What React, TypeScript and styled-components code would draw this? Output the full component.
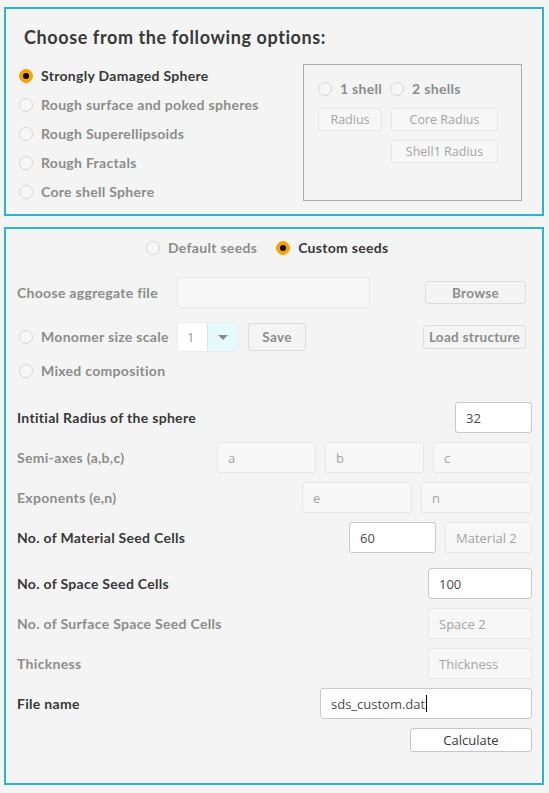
import React from 'react';
import styled, { createGlobalStyle } from 'styled-components';

const colors = {
    page: '#f4f4f4',
    frame: '#2bb5cd',
    text: '#383838',
    muted: '#8c8c8c',
    fieldBorder: '#c9c9c9',
    fieldMuted: '#e6e6e6',
    orange: '#f6a400',
};

const GlobalStyle = createGlobalStyle`
    html, body {
        margin: 0;
        background: ${colors.page};
    }
    body {
        padding: 7px 5px 0 4px;
        font-family: Lato, "Open Sans", sans-serif;
        color: ${colors.text};
    }
`;

// Outer cyan framed section
const Panel = styled.section`
    border: 2px solid ${colors.frame};
    box-sizing: border-box;
    width: 540px;
`;

const OptionsPanel = styled(Panel)`
    height: 209px;
    padding: 17px 20px 0 13px;
    margin-bottom: 11px;
`;

const SeedsPanel = styled(Panel)`
    height: 558px;
    padding: 9px 10px 0 11px;
    display: flex;
    flex-direction: column;
`;

const Title = styled.h2`
    margin: 0 0 0 5px;
    font-size: 18px;
    line-height: 23px;
    letter-spacing: 0.6px;
    font-weight: 700;
    color: ${colors.text};
`;

const OptionsBody = styled.div`
    display: flex;
    margin-top: 17px;
`;

const OptionList = styled.ul`
    list-style: none;
    margin: 0;
    padding: 0;
    flex: 1;
    display: flex;
    flex-direction: column;
    gap: 9px;
`;

// Radio dot + label
const RadioItem = styled.label<{ $muted?: boolean }>`
    display: flex;
    align-items: center;
    gap: 8px;
    height: 20px;
    font-size: 14px;
    line-height: 20px;
    letter-spacing: 0.3px;
    font-weight: 700;
    white-space: nowrap;
    color: ${p => (p.$muted ? colors.muted : colors.text)};
`;

const Dot = styled.span<{ $on?: boolean }>`
    width: 14px;
    height: 14px;
    border-radius: 50%;
    box-sizing: border-box;
    flex: none;
    border: 1px solid ${p => (p.$on ? colors.orange : '#d6d6d6')};
    background: ${p => (p.$on ? colors.orange : '#f6f6f6')};
    display: flex;
    align-items: center;
    justify-content: center;
    &::after {
        content: '';
        width: 6px;
        height: 6px;
        border-radius: 50%;
        background: #000;
        display: ${p => (p.$on ? 'block' : 'none')};
    }
`;

const Radio = ({ label, on, muted }: { label: string; on?: boolean; muted?: boolean }) => (
    <RadioItem $muted={muted}>
        <Dot $on={on} />
        {label}
    </RadioItem>
);

// Grey box holding the shell options
const ShellBox = styled.div`
    width: 219px;
    height: 137px;
    box-sizing: border-box;
    border: 1px solid #aaaaaa;
    margin-top: -2px;
    padding: 14px 0 0 14px;
    display: grid;
    grid-template-columns: 64px 107px;
    grid-auto-rows: min-content;
    column-gap: 9px;
    row-gap: 9px;
`;

const ShellRadios = styled.div`
    grid-column: 1 / 3;
    display: flex;
    gap: 8px;
`;

const Field = styled.div<{ $w: number; $h?: number; $off?: boolean }>`
    width: ${p => p.$w}px;
    height: ${p => p.$h ?? 31}px;
    box-sizing: border-box;
    flex: none;
    border: 1px solid ${p => (p.$off ? colors.fieldMuted : colors.fieldBorder)};
    border-radius: 3px;
    background: ${p => (p.$off ? '#f7f7f7' : '#ffffff')};
    color: ${p => (p.$off ? '#a4a4a4' : '#4a4a4a')};
    font-family: "Open Sans", sans-serif;
    font-size: 13px;
    display: flex;
    align-items: center;
    padding-left: 10px;
    white-space: nowrap;
`;

const SmallField = styled(Field)`
    justify-content: center;
    padding-left: 0;
    font-size: 12.5px;
`;

const Caret = styled.span`
    width: 1px;
    height: 17px;
    background: #000;
    margin-left: 1px;
`;

const Form = styled.div`
    display: flex;
    flex-direction: column;
    gap: 9px;
`;

const Row = styled.div<{ $h?: number; $top?: number }>`
    display: flex;
    align-items: center;
    gap: 9px;
    height: ${p => p.$h ?? 31}px;
    margin-top: ${p => p.$top ?? 0}px;
`;

const SeedChoice = styled(Row)`
    height: 20px;
    padding-left: 129px;
    gap: 19px;
`;

const Label = styled.span<{ $muted?: boolean }>`
    flex: 1;
    font-size: 14px;
    letter-spacing: 0.3px;
    font-weight: 700;
    white-space: nowrap;
    color: ${p => (p.$muted ? colors.muted : colors.text)};
`;

// Left column of the file/monomer rows, fixed so the controls line up
const LeadCell = styled.div<{ $indent?: number }>`
    flex: none;
    width: 151px;
    display: flex;
    align-items: center;
    padding-left: ${p => p.$indent ?? 0}px;
    box-sizing: border-box;
`;

const Button = styled.button<{ $w: number; $h: number; $plain?: boolean }>`
    width: ${p => p.$w}px;
    height: ${p => p.$h}px;
    box-sizing: border-box;
    flex: none;
    border: 1px solid ${p => (p.$plain ? '#c6c6c6' : '#dcdcdc')};
    border-radius: 3px;
    background: ${p => (p.$plain ? '#ffffff' : '#f4f4f4')};
    color: ${p => (p.$plain ? colors.text : colors.muted)};
    font-family: ${p => (p.$plain ? '"Open Sans", sans-serif' : 'Lato, sans-serif')};
    font-weight: ${p => (p.$plain ? 400 : 700)};
    letter-spacing: ${p => (p.$plain ? 0 : 0.3)}px;
    font-size: ${p => (p.$plain ? 13 : 13.5)}px;
    padding: 0;
`;

const Spacer = styled.div`
    flex: 1;
`;

const Select = styled.div`
    width: 62px;
    height: 30px;
    box-sizing: border-box;
    border: 1px solid #ececec;
    border-radius: 3px;
    display: flex;
    overflow: hidden;
    flex: none;
`;

const SelectValue = styled.span`
    width: 30px;
    background: #fff;
    border-right: 1px solid #e3e3e3;
    color: #9a9a9a;
    font-family: "Open Sans", sans-serif;
    font-size: 13px;
    display: flex;
    align-items: center;
    padding-left: 9px;
    box-sizing: border-box;
`;

const SelectArrow = styled.span`
    flex: 1;
    background: #e5fafd;
    display: flex;
    align-items: center;
    justify-content: center;
    &::after {
        content: '';
        border-left: 5px solid transparent;
        border-right: 5px solid transparent;
        border-top: 5px solid #8a8a8a;
    }
`;

const App = () => (
    <>
        <GlobalStyle />
        <OptionsPanel>
            <Title>Choose from the following options:</Title>
            <OptionsBody>
                <OptionList>
                    <Radio label="Strongly Damaged Sphere" on />
                    <Radio label="Rough surface and poked spheres" muted />
                    <Radio label="Rough Superellipsoids" muted />
                    <Radio label="Rough Fractals" muted />
                    <Radio label="Core shell Sphere" muted />
                </OptionList>
                <ShellBox>
                    <ShellRadios>
                        <Radio label="1 shell" muted />
                        <Radio label="2 shells" muted />
                    </ShellRadios>
                    <SmallField $w={64} $h={23} $off>Radius</SmallField>
                    <SmallField $w={107} $h={23} $off>Core Radius</SmallField>
                    <span />
                    <SmallField $w={107} $h={23} $off>Shell1 Radius</SmallField>
                </ShellBox>
            </OptionsBody>
        </OptionsPanel>

        <SeedsPanel>
            <SeedChoice>
                <Radio label="Default seeds" muted />
                <Radio label="Custom seeds" on />
            </SeedChoice>

            <Form>
                <Row $top={19}>
                    <LeadCell>
                        <Label $muted>Choose aggregate file</Label>
                    </LeadCell>
                    <Field $w={193} $off />
                    <Spacer />
                    <Button $w={101} $h={23} style={{ marginRight: 6 }}>Browse</Button>
                </Row>
                <Row $h={30} $top={5}>
                    <LeadCell $indent={2}>
                        <Radio label="Monomer size scale" muted />
                    </LeadCell>
                    <Select>
                        <SelectValue>1</SelectValue>
                        <SelectArrow />
                    </Select>
                    <Button $w={58} $h={28}>Save</Button>
                    <Spacer />
                    <Button $w={103} $h={24} style={{ marginRight: 6 }}>Load structure</Button>
                </Row>
                <Row $h={20}>
                    <LeadCell $indent={2}>
                        <Radio label="Mixed composition" muted />
                    </LeadCell>
                </Row>

                <Row $top={12}>
                    <Label>Intitial Radius of the sphere</Label>
                    <Field $w={77}>32</Field>
                </Row>
                <Row>
                    <Label $muted>Semi-axes (a,b,c)</Label>
                    <Field $w={99} $off>a</Field>
                    <Field $w={99} $off>b</Field>
                    <Field $w={99} $off>c</Field>
                </Row>
                <Row>
                    <Label $muted>Exponents (e,n)</Label>
                    <Field $w={110} $off>e</Field>
                    <Field $w={111} $off>n</Field>
                </Row>
                <Row>
                    <Label>No. of Material Seed Cells</Label>
                    <Field $w={87}>60</Field>
                    <Field $w={87} $off>Material 2</Field>
                </Row>
                <Row $top={6}>
                    <Label>No. of Space Seed Cells</Label>
                    <Field $w={104}>100</Field>
                </Row>
                <Row>
                    <Label $muted>No. of Surface Space Seed Cells</Label>
                    <Field $w={104} $off>Space 2</Field>
                </Row>
                <Row>
                    <Label $muted>Thickness</Label>
                    <Field $w={104} $off>Thickness</Field>
                </Row>
                <Row>
                    <Label>File name</Label>
                    <Field $w={212}>
                        sds_custom.dat
                        <Caret />
                    </Field>
                </Row>
                <Row $h={24}>
                    <Spacer />
                    <Button $w={122} $h={24} $plain>Calculate</Button>
                </Row>
            </Form>
        </SeedsPanel>
    </>
);

export default App;
